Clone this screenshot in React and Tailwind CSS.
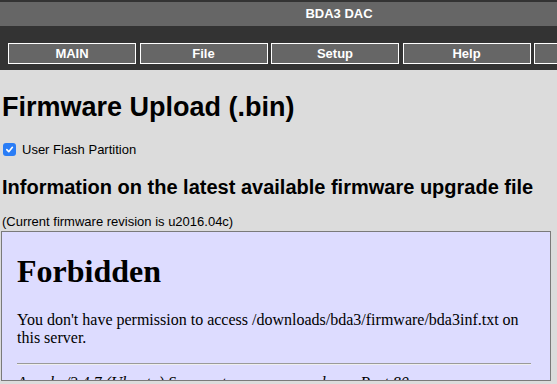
export default function App() {
  const tabs = ['MAIN', 'File', 'Setup', 'Help', '']

  return (
    <div className="w-[557px] h-[384px] overflow-hidden bg-[#dcdcdc] font-['Liberation_Sans',Arial,sans-serif] text-black">
      <header className="bg-[#333333] pt-[2px]">
        <div className="w-[678px] h-[24px] bg-[#666666] flex items-center justify-center text-white font-bold text-[13px]">
          BDA3 DAC
        </div>
        <nav className="flex gap-[3.5px] pl-[8px] pt-[17px] pb-[6px]">
          {tabs.map((t, i) => (
            <div
              key={i}
              className="w-[128px] h-[21px] shrink-0 border border-white bg-[#666666] flex items-center justify-center text-white font-bold text-[13px]"
            >
              {t}
            </div>
          ))}
        </nav>
      </header>

      <main className="pl-[2px]">
        <h1 className="mt-[22px] text-[27px] leading-[31px] font-bold">Firmware Upload (.bin)</h1>

        <label className="mt-[20px] flex items-center h-[13px] text-[13px] leading-[15px]">
          <span className="ml-[1px] w-[13px] h-[13px] rounded-[3px] bg-[#2a7df6] flex items-center justify-center">
            <svg width="9" height="9" viewBox="0 0 10 10" fill="none">
              <path d="M2 5.2 L4.2 7.4 L8.2 2.6" stroke="white" strokeWidth="1.8" strokeLinecap="round" strokeLinejoin="round" />
            </svg>
          </span>
          <span className="ml-[6px]">User Flash Partition</span>
        </label>

        <h2 className="mt-[20px] text-[20px] leading-[23px] font-bold">
          Information on the latest available firmware upgrade file
        </h2>

        <p className="mt-[15px] text-[13px] leading-[15px]">(Current firmware revision is u2016.04c)</p>
      </main>

      <div className="mt-[2px] ml-[1px] w-[550px] h-[150px] overflow-hidden border border-[#7a7a7a] bg-[#dddcff] pl-[15px] pr-[19px] font-['Liberation_Serif','Times_New_Roman',serif]">
        <h1 className="mt-[21px] text-[32px] leading-[37px] font-bold">Forbidden</h1>
        <p className="mt-[21px] text-[16px] leading-[18px]">
          You don't have permission to access /downloads/bda3/firmware/bda3inf.txt on
          <br />
          this server.
        </p>
        <hr className="mt-[16px] border-0 border-t border-t-[#9a9a9a] border-b border-b-[#eeeeee]" />
        <address className="mt-[9px] text-[16px] leading-[18px] italic whitespace-nowrap">
          Apache/2.4.7 (Ubuntu) Server at www.exasound.com Port 80
        </address>
      </div>
    </div>
  )
}
